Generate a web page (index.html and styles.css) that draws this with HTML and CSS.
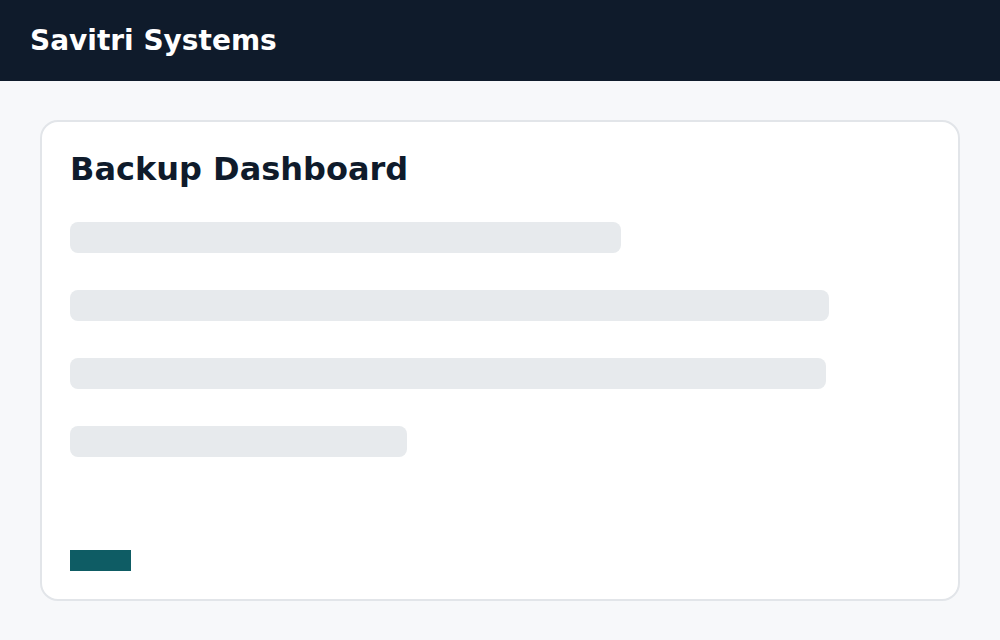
FILE: index.html
```html
<!DOCTYPE html>
<html lang="en">
<head>
    <meta charset="UTF-8">
    <title>Savitri Systems</title>
    <link rel="stylesheet" href="styles.css">
</head>
<body>
    <header class="topbar">
        <span class="brand">Savitri Systems</span>
    </header>

    <main class="page">
        <section class="card">
            <h1 class="card-title">Backup Dashboard</h1>

            <!-- loading placeholders -->
            <div class="skeleton-list">
                <div class="skeleton" style="width: 551px"></div>
                <div class="skeleton" style="width: 759px"></div>
                <div class="skeleton" style="width: 756px"></div>
                <div class="skeleton" style="width: 337px"></div>
            </div>

            <div class="card-actions">
                <span class="action-block"></span>
            </div>
        </section>
    </main>
</body>
</html>
```

FILE: styles.css
```css
:root {
    --navy: #0f1b2b;
    --page-bg: #f7f8fa;
    --card-border: #e2e5e9;
    --skeleton: #e7eaed;
    --teal: #0e5c64;
}

* {
    margin: 0;
    padding: 0;
    box-sizing: border-box;
}

body {
    font-family: "DejaVu Sans", sans-serif;
    background: var(--page-bg);
    color: var(--navy);
}

.topbar {
    height: 81px;
    background: var(--navy);
    display: flex;
    align-items: center;
    padding: 0 30px;
}

.brand {
    color: #ffffff;
    font-size: 28px;
    font-weight: bold;
}

.page {
    padding: 39px 40px 40px;
}

.card {
    background: #ffffff;
    border: 2px solid var(--card-border);
    border-radius: 18px;
    padding: 28px;
}

.card-title {
    font-size: 32px;
    font-weight: bold;
    line-height: normal;
}

.skeleton-list {
    margin-top: 34px;
    display: flex;
    flex-direction: column;
    gap: 37px;
}

.skeleton {
    height: 31px;
    border-radius: 8px;
    background: var(--skeleton);
}

.card-actions {
    margin-top: 93px;
    display: flex;
}

.action-block {
    width: 61px;
    height: 21px;
    background: var(--teal);
}
```
